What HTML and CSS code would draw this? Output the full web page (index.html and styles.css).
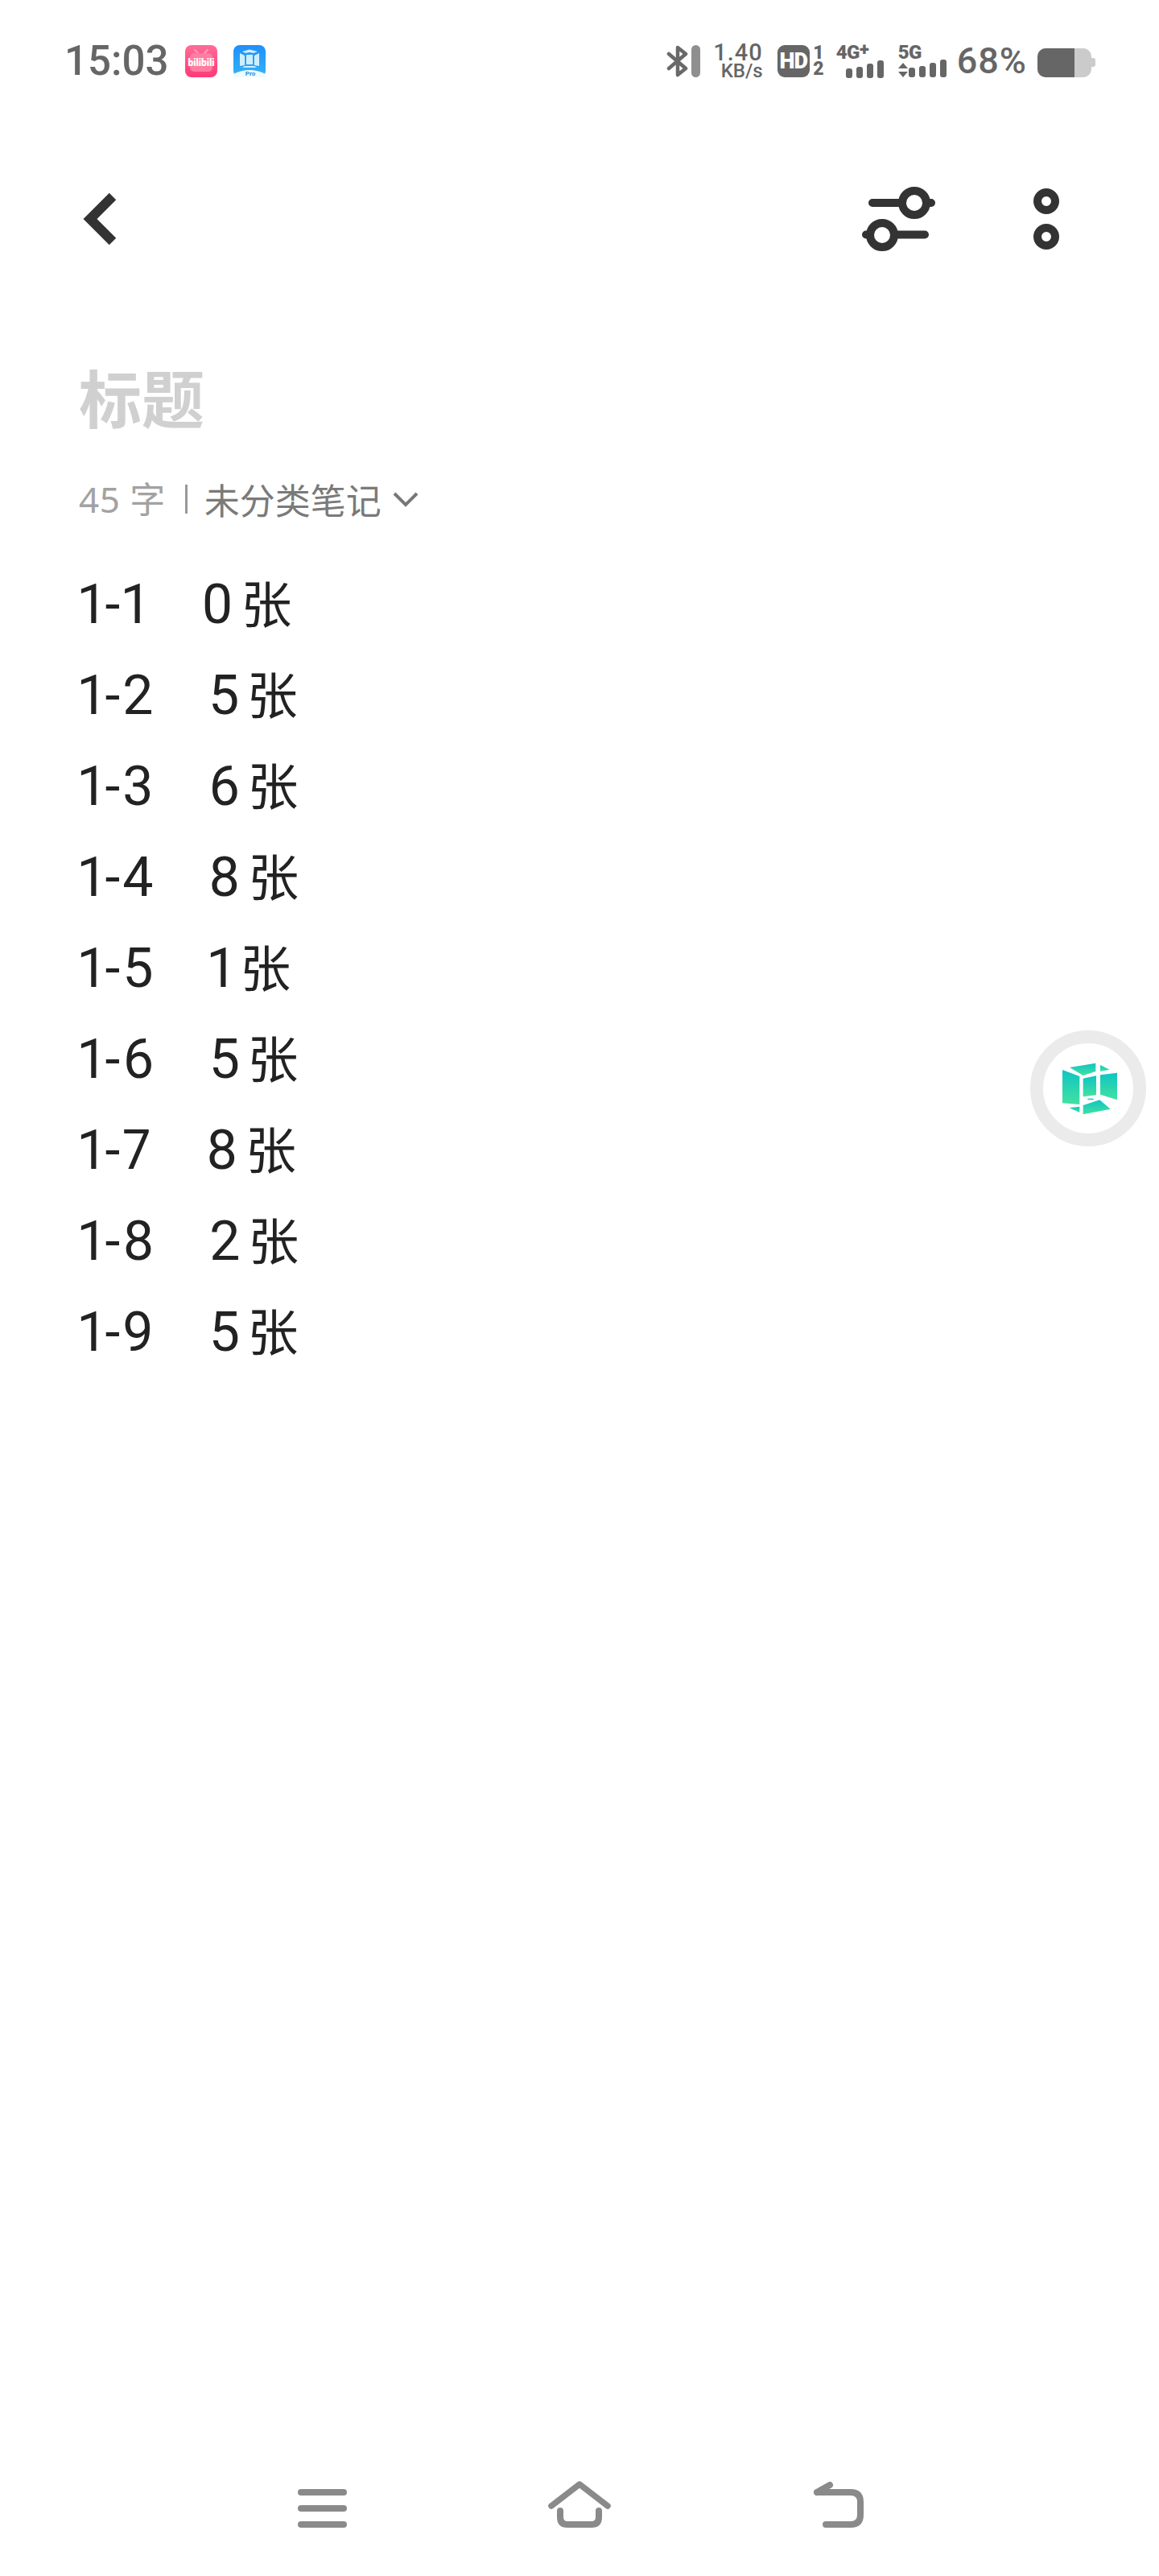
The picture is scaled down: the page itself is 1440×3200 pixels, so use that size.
FILE: index.html
```html
<!DOCTYPE html>
<html lang="zh-CN">

<head>
    <meta charset="UTF-8">
    <meta name="viewport" content="width=device-width, initial-scale=1.0">
    <title>标题</title>
    <link rel="stylesheet" href="styles.css">
</head>

<body>
    <div class="screen">
        <!-- Status bar -->
        <div class="status-bar">
            <span class="clock">15:03</span>
            <svg class="app-icon app-bili" width="40" height="40" viewBox="0 0 40 40">
                <defs>
                    <linearGradient id="biliBg" x1="0" y1="0" x2="0" y2="1">
                        <stop offset="0" stop-color="#ff6c98"/>
                        <stop offset="1" stop-color="#ff3a76"/>
                    </linearGradient>
                </defs>
                <rect width="40" height="40" rx="8" fill="url(#biliBg)"/>
                <path d="M12 6l4 4M28 6l-4 4" stroke="#ff9dba" stroke-width="2" stroke-linecap="round"/>
                <rect x="6" y="10" width="28" height="23" rx="5" fill="#ff7ca2"/>
                <text x="20" y="26" text-anchor="middle" textLength="33" lengthAdjust="spacingAndGlyphs" class="bili-text">bilibili</text>
            </svg>
            <svg class="app-icon app-vphone" width="40" height="40" viewBox="0 0 40 40">
                <defs>
                    <linearGradient id="proBg" x1="0" y1="0" x2="0" y2="1">
                        <stop offset="0" stop-color="#1f8ffa"/>
                        <stop offset="1" stop-color="#35b4f5"/>
                    </linearGradient>
                </defs>
                <rect width="40" height="40" rx="8" fill="url(#proBg)"/>
                <path d="M11 8L20 5.500 30 8 25 10 20 9 15 10ZM8 10l6 3v12l-6 1ZM32 10l-6 3v12l6 1ZM16 12h8v12h-8ZM14 26h12l3 2H11Z" fill="#cfeefd"/>
                <path d="M0 40v-4q20-10 40 0v4z" fill="#eefbff"/>
                <text x="21" y="38" text-anchor="middle" class="pro-text">Pro</text>
            </svg>

            <div class="status-right">
                <svg class="bt-icon" width="42" height="40" viewBox="0 0 42 40">
                    <path d="M3 11l21 18-10 8V3l10 8L3 29" fill="none" stroke="#696969" stroke-width="4.500" stroke-linejoin="round" stroke-linecap="round"/>
                    <rect x="31" y="0" width="11" height="40" rx="5.500" fill="#8f8f8f"/>
                </svg>
                <div class="speed">
                    <span class="speed-num">1.40</span>
                    <span class="speed-unit">KB/s</span>
                </div>
                <div class="hd">
                    <span class="hd-box">HD</span>
                    <div class="sim-nums">
                        <span>1</span>
                        <span>2</span>
                    </div>
                </div>
                <div class="signal">
                    <span class="net-label">4G<span class="net-plus">+</span></span>
                    <div class="bars bars-4g">
                        <i class="b1"></i><i class="b2"></i><i class="b3"></i><i class="b4"></i>
                    </div>
                </div>
                <div class="signal signal-5g">
                    <span class="net-label">5G</span>
                    <div class="bars-row">
                        <div class="arrows">
                            <i class="arrow-up"></i>
                            <i class="arrow-down"></i>
                        </div>
                        <div class="bars">
                            <i class="b1"></i><i class="b2"></i><i class="b3"></i><i class="b4"></i>
                        </div>
                    </div>
                </div>
                <span class="battery-text">68%</span>
                <div class="battery">
                    <div class="battery-body">
                        <div class="battery-level"></div>
                    </div>
                    <div class="battery-nub"></div>
                </div>
            </div>
        </div>

        <!-- Toolbar -->
        <div class="toolbar">
            <svg width="44" height="70" viewBox="0 0 44 70">
                <path d="M37 7L9 35l28 28" fill="none" stroke="#333" stroke-width="12"/>
            </svg>
            <svg class="tool-sliders" width="92" height="80" viewBox="0 0 92 80">
                <path d="M13 20h73M5 59.500h73" stroke="#333" stroke-width="10" stroke-linecap="round"/>
                <circle cx="65" cy="20" r="15" fill="#fff" stroke="#333" stroke-width="10"/>
                <circle cx="25" cy="60" r="15" fill="#fff" stroke="#333" stroke-width="10"/>
            </svg>
            <svg class="tool-dots" width="32" height="76" viewBox="0 0 32 76">
                <circle cx="16" cy="16" r="11" fill="none" stroke="#333" stroke-width="10"/>
                <circle cx="16" cy="60" r="11" fill="none" stroke="#333" stroke-width="10"/>
            </svg>
        </div>

        <!-- Note -->
        <div class="note">
            <h1 class="note-title">标题</h1>
            <div class="note-meta">
                <span class="meta-count">45 字</span>
                <span class="meta-sep"></span>
                <span class="meta-cat">未分类笔记</span>
                <svg class="meta-arrow" width="32" height="20" viewBox="0 0 32 20">
                    <path d="M2 3l14 14L30 3" fill="none" stroke="#777" stroke-width="4"/>
                </svg>
            </div>
            <div class="note-body">
                <p class="row">1-1    0<span class="unit"> 张</span></p>
                <p class="row">1-2    5<span class="unit"> 张</span></p>
                <p class="row">1-3    6<span class="unit"> 张</span></p>
                <p class="row">1-4    8<span class="unit"> 张</span></p>
                <p class="row">1-5    1<span class="unit"> 张</span></p>
                <p class="row">1-6    5<span class="unit"> 张</span></p>
                <p class="row">1-7    8<span class="unit"> 张</span></p>
                <p class="row">1-8    2<span class="unit"> 张</span></p>
                <p class="row">1-9    5<span class="unit"> 张</span></p>
            </div>
        </div>

        <!-- Floating ball -->
        <div class="float-ball">
            <svg width="100" height="100" viewBox="127 125 300 300">
                <defs>
                    <linearGradient id="cubeFill" x1="0" y1="0" x2="0" y2="1">
                        <stop offset="0" stop-color="#0fc4c4"/>
                        <stop offset="1" stop-color="#43e2a0"/>
                    </linearGradient>
                </defs>
                <g fill="url(#cubeFill)">
                    <path d="M208 197L305 181V212L258 227Z"/>
                    <path d="M322 188L357 205L322 212Z"/>
                    <path d="M181 206L245 230V335L181 330Z"/>
                    <path d="M258 238L307 228V300L258 306Z"/>
                    <path d="M322 225L385 217V318L322 298Z"/>
                    <path d="M207 348L245 343V365Z"/>
                    <path d="M258 338L320 318L360 352L258 372Z"/>
                    <path d="M275 313H297V318H275Z"/>
                </g>
            </svg>
        </div>

        <!-- Bottom nav -->
        <div class="bottom-nav">
            <svg width="61" height="60" viewBox="0 0 61 60">
                <rect y="10" width="61" height="8" rx="4" fill="#8a8a8a"/>
                <rect y="30" width="61" height="8" rx="4" fill="#8a8a8a"/>
                <rect y="50" width="61" height="8" rx="4" fill="#8a8a8a"/>
            </svg>
            <svg class="nav-home" width="80" height="60" viewBox="0 0 80 60">
                <path d="M5 31L40 4l35 27" fill="none" stroke="#8a8a8a" stroke-width="7.500" stroke-linecap="round" stroke-linejoin="round"/>
                <path d="M16 37v8q0 9 9 9h30q9 0 9-9v-8" fill="none" stroke="#8a8a8a" stroke-width="8" stroke-linecap="round"/>
            </svg>
            <svg class="nav-back" width="66" height="60" viewBox="0 0 66 60">
                <path d="M6 14h42q12 0 12 12v16q0 12-12 12H17M6 14l16-9" fill="none" stroke="#8a8a8a" stroke-width="8" stroke-linecap="round" stroke-linejoin="round"/>
            </svg>
        </div>
    </div>
</body>

</html>
```

FILE: styles.css
```css
* {
    box-sizing: border-box;
}

body {
    margin: 0;
    padding: 0;
    background-color: #fff;
    font-family: "Roboto", "Noto Sans CJK SC", sans-serif;
}

.screen {
    position: relative;
    display: flex;
    flex-direction: column;
    width: 1440px;
    height: 3200px;
    overflow: hidden;
}

/* Status bar */
.status-bar {
    display: flex;
    align-items: center;
    height: 41px;
    margin-top: 55px;
    padding-left: 80px;
}

.clock {
    width: 150px;
    font-size: 51px;
    font-weight: 500;
    color: #666;
    line-height: 41px;
}

.app-icon {
    flex: none;
}

.app-vphone {
    margin-left: 20px;
}

.bili-text {
    font-family: "Roboto", sans-serif;
    font-size: 12px;
    font-weight: 900;
    fill: #fff;
}

.pro-text {
    font-family: "Roboto", sans-serif;
    font-size: 8px;
    font-weight: 700;
    fill: #2a8fe0;
}

.status-right {
    display: flex;
    align-items: center;
    height: 41px;
    margin-left: auto;
    padding-right: 79px;
    color: #666;
}

.bt-icon {
    flex: none;
}

.speed {
    display: flex;
    flex-direction: column;
    align-items: flex-end;
    width: 60px;
    margin-left: 18px;
}

.speed-num {
    font-size: 29px;
    line-height: 25px;
    font-weight: 500;
    letter-spacing: 1px;
}

.speed-unit {
    font-size: 24px;
    line-height: 20px;
    font-weight: 500;
}

.hd {
    display: flex;
    margin-left: 18px;
}

.hd-box {
    width: 40px;
    height: 40px;
    background-color: #666;
    border-radius: 9px;
    color: #fff;
    font-size: 27px;
    font-weight: 900;
    line-height: 40px;
    letter-spacing: -1px;
    text-align: center;
}

.sim-nums {
    display: flex;
    flex-direction: column;
    justify-content: space-between;
    width: 18px;
    font-size: 23px;
    font-weight: 900;
    line-height: 20px;
    text-align: right;
}

.signal {
    display: flex;
    flex-direction: column;
    align-items: flex-start;
    width: 60px;
    height: 41px;
    margin-left: 15px;
}

.net-label {
    font-size: 24px;
    font-weight: 900;
    line-height: 20px;
    letter-spacing: -0.5px;
}

.net-plus {
    position: relative;
    top: -4px;
    font-size: 22px;
}

.bars {
    display: flex;
    align-items: flex-end;
    gap: 5px;
    height: 22px;
}

.bars i {
    display: block;
    width: 8px;
    background-color: #666;
    border-radius: 3px;
}

.bars .b1 { height: 12px; }
.bars .b2 { height: 14px; }
.bars .b3 { height: 18px; }
.bars .b4 { height: 22px; }

.bars-4g {
    margin-top: -1px;
    margin-left: 12px;
}

.signal-5g {
    margin-left: 17px;
}

.bars-row {
    display: flex;
    align-items: flex-end;
    margin-top: -1px;
}

.arrows {
    display: flex;
    flex-direction: column;
    gap: 4px;
    width: 13px;
}

.arrow-up,
.arrow-down {
    display: block;
    width: 0;
    height: 0;
    border-left: 6px solid transparent;
    border-right: 6px solid transparent;
}

.arrow-up {
    border-bottom: 7px solid #666;
}

.arrow-down {
    border-top: 7px solid #666;
}

.battery-text {
    margin-left: 13px;
    font-size: 45px;
    font-weight: 500;
    line-height: 41px;
    letter-spacing: 1px;
}

.battery {
    display: flex;
    align-items: center;
    margin-left: 13px;
}

.battery-body {
    width: 67px;
    height: 36px;
    margin-top: 4px;
    background-color: #cbcbcb;
    border-radius: 10px;
    overflow: hidden;
}

.battery-level {
    width: 68%;
    height: 100%;
    background-color: #666;
}

.battery-nub {
    width: 5px;
    height: 11px;
    margin-top: 4px;
    background-color: #cbcbcb;
    border-radius: 0 3px 3px 0;
}

/* Toolbar */
.toolbar {
    display: flex;
    align-items: center;
    height: 80px;
    margin-top: 136px;
    padding-left: 103px;
    padding-right: 124px;
}

.tool-sliders {
    margin-left: auto;
}

.tool-dots {
    margin-left: 121px;
}

/* Note */
.note {
    padding-left: 98px;
}

.note-title {
    margin: 134px 0 0;
    font-family: "Noto Sans CJK SC", sans-serif;
    font-size: 78px;
    font-weight: 700;
    line-height: 92px;
    color: #d0d0d0;
}

.note-meta {
    display: flex;
    align-items: center;
    height: 60px;
    margin-top: 52px;
    font-size: 44px;
    line-height: 60px;
}

.meta-count {
    font-family: "Noto Sans", "Noto Sans CJK SC", sans-serif;
    color: #a2a2a2;
    letter-spacing: 0.5px;
    white-space: pre;
}

.meta-sep {
    width: 3px;
    height: 36px;
    margin-left: 24px;
    margin-right: 21px;
    background-color: #999;
}

.meta-cat {
    font-family: "Noto Sans CJK SC", sans-serif;
    font-weight: 400;
    color: #7a7a7a;
}

.meta-arrow {
    margin-left: 14px;
}

.note-body {
    margin-top: 40px;
}

.row {
    margin: 0;
    height: 113px;
    font-size: 68px;
    font-weight: 400;
    line-height: 113px;
    letter-spacing: 3px;
    word-spacing: -3.5px;
    color: #222;
    white-space: pre;
    font-variant-numeric: proportional-nums;
}

.unit {
    font-family: "Noto Sans CJK SC", sans-serif;
    font-size: 63px;
    font-weight: 400;
    word-spacing: -10.5px;
}

/* Floating ball */
.float-ball {
    position: absolute;
    top: 1280px;
    right: 16px;
    display: flex;
    align-items: center;
    justify-content: center;
    width: 144px;
    height: 144px;
    background-color: #fff;
    border: 16px solid #ebebeb;
    border-radius: 50%;
}

/* Bottom nav */
.bottom-nav {
    display: flex;
    margin-top: auto;
    margin-bottom: 58px;
    padding-left: 370px;
}

.nav-home {
    margin-left: 249px;
}

.nav-back {
    margin-left: 249px;
}
```
